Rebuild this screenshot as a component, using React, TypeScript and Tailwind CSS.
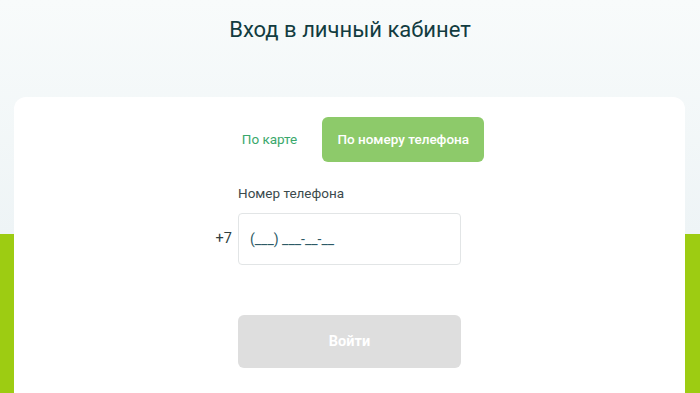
export default function App() {
  return (
    <div
      className="h-screen w-full bg-[linear-gradient(to_bottom,#f8fbfb_0px,#eef4f6_234px,#9dcc12_234px,#9dcc12_100%)] font-['Roboto',sans-serif] overflow-hidden"
    >
      <h1 className="pt-[16px] text-center text-[22px] leading-[28px] text-[#123c40]">
        Вход в личный кабинет
      </h1>

      <div className="mx-[14px] mt-[53px] mr-[15px] h-[296px] rounded-t-[12px] bg-white pt-[20px]">
        <div className="flex justify-center items-center pl-[14px] gap-[12px]">
          <button className="h-[45px] px-[13px] text-[13.5px] text-[#3aa86b]">По карте</button>
          <button className="h-[45px] w-[162px] rounded-[6px] bg-[#8dca6a] text-[13.5px] font-medium text-white">
            По номеру телефона
          </button>
        </div>

        <div className="mx-auto w-[223px]">
          <div className="mt-[22px] text-[13.5px] leading-[18px] text-[#3b4a4c]">Номер телефона</div>
          <div className="mt-[11px] -ml-[24px] flex items-center gap-[6px]">
            <span className="w-[18px] text-right text-[14.5px] text-[#2f3e40]">+7</span>
            <div className="flex h-[52px] w-[223px] items-center rounded-[4px] border border-[#e2e5e6] px-[11px] text-[14px] text-[#2d5a66]">
              (___) ___-__-__
            </div>
          </div>
          <button className="mt-[50px] h-[53px] w-[223px] rounded-[6px] bg-[#dedede] text-[14.5px] font-bold text-white">
            Войти
          </button>
        </div>
      </div>
    </div>
  )
}
